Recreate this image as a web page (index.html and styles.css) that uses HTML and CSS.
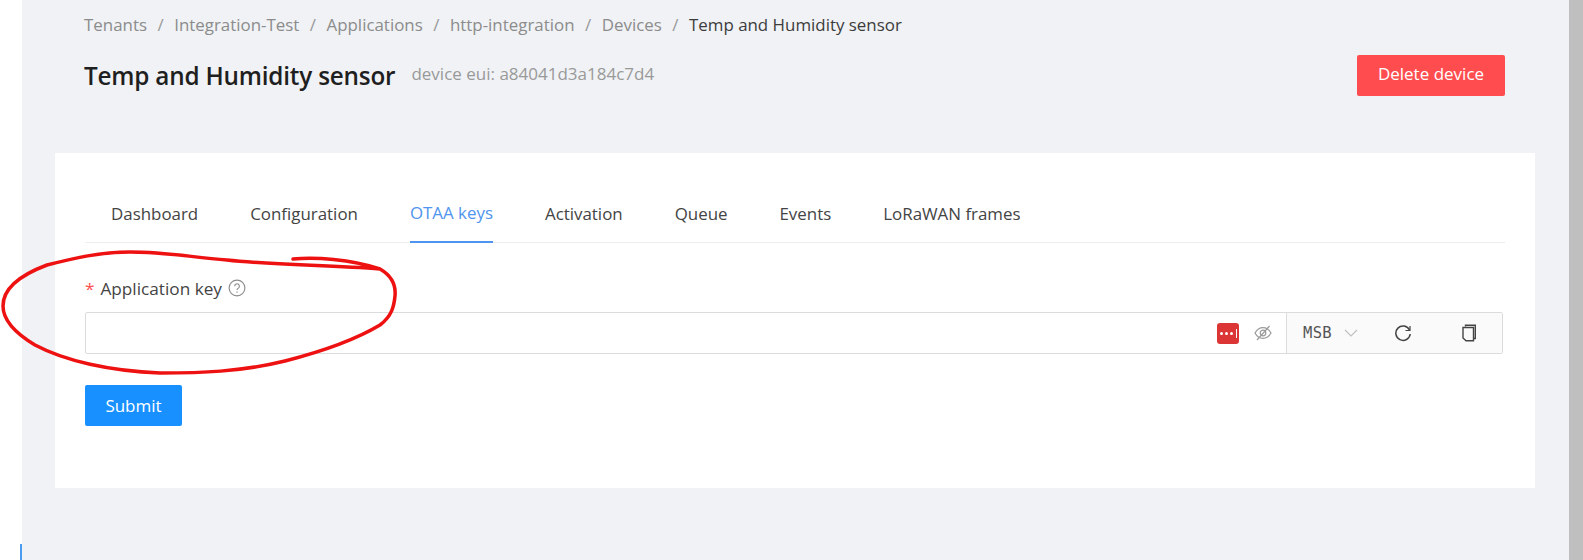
FILE: index.html
```html
<!DOCTYPE html>
<html lang="en">
<head>
<meta charset="utf-8">
<title>Temp and Humidity sensor</title>
<link rel="stylesheet" href="styles.css">
</head>
<body>
<div class="shot">
  <div class="gutter"><div class="gutter-mark"></div></div>
  <main class="content">
    <header class="page-head">
      <nav class="crumbs">
        <span>Tenants</span><i>/</i><span>Integration-Test</span><i>/</i><span>Applications</span><i>/</i><span>http-integration</span><i>/</i><span>Devices</span><i>/</i><span class="current">Temp and Humidity sensor</span>
      </nav>
      <div class="title-row">
        <h1>Temp and Humidity sensor</h1>
        <span class="sub">device eui: a84041d3a184c7d4</span>
        <button class="btn btn-danger">Delete device</button>
      </div>
    </header>
    <section class="card">
      <div class="tabs">
        <a>Dashboard</a><a>Configuration</a><a class="active">OTAA keys</a><a>Activation</a><a>Queue</a><a>Events</a><a>LoRaWAN frames</a>
      </div>
      <div class="label-row">
        <span class="req">*</span><span>Application key</span>
        <svg class="help" viewBox="0 0 16 16" width="18" height="18" fill="none" stroke="#8c8c8c" stroke-width="1"><circle cx="8" cy="8" r="7"/><path d="M5.900 6.400a2.100 2.100 0 1 1 3.300 1.700c-.8.5-1.200.9-1.200 1.700"/><path d="M8 11.200v1"/></svg>
      </div>
      <div class="key-field">
        <div class="key-input">
          <span class="lp"><b></b><b></b><b></b><em></em></span>
          <svg class="eye" viewBox="0 0 18 18" width="18" height="18" fill="none" stroke="#9a9a9a" stroke-width="1.2"><path d="M1 9c2-3.600 4.800-5.400 8-5.400s6 1.800 8 5.400c-2 3.600-4.800 5.400-8 5.400S3 12.600 1 9z"/><circle cx="9" cy="9" r="2.800"/><path d="M3 16L15.500 2"/></svg>
        </div>
        <div class="key-addon">
          <span class="msb">MSB</span>
          <svg class="chev" viewBox="0 0 14 8" width="14" height="8" fill="none" stroke="#bfbfbf" stroke-width="1.100"><path d="M1 1l6 6 6-6"/></svg>
          <svg class="reload" viewBox="0 0 18 18" width="18" height="18" fill="none" stroke="#444" stroke-width="1.500"><path d="M15.500 6A7.200 7.200 0 1 0 16.200 10"/><path d="M16 2v4.500h-4.500" stroke-width="1.200"/></svg>
          <svg class="copy" viewBox="0 0 16 18" width="16" height="18" fill="none" stroke="#444" stroke-width="1.400"><path d="M4.500 2.500V1.200h9.800v13.300h-1.400"/><path d="M2 3.500h10.500v13.300H5L2 14z"/></svg>
        </div>
      </div>
      <button class="btn btn-primary">Submit</button>
    </section>
  </main>
  <div class="scrollbar"></div>
  <svg class="scribble" viewBox="0 0 1583 560" width="1583" height="560" fill="none" stroke="#ee1111" stroke-width="3.500" stroke-linecap="round" stroke-linejoin="round"><path d="M293 259C315 257 350 259 380 269C392 276 396 286 395 296C394 306 392 316 380 325C355 340 320 352 285 361C240 372 200 373 160 373C110 371 65 361 35 345C15 333 3 320 3 306C3 292 15 277 47 265C75 258 100 252 130 252C165 252 190 257 227 260C270 265 330 265 380 269"/></svg>
</div>
</body>
</html>
```
FILE: styles.css
```css
* { box-sizing: border-box; }
html, body { margin: 0; padding: 0; }
body { font-family: "Open Sans", "Noto Sans", sans-serif; font-size: 14px; color: #3c3c3c; background: #fff; }
.shot { position: relative; display: flex; width: 1583px; height: 560px; overflow: hidden; }
.gutter { width: 22px; flex: none; display: flex; align-items: flex-end; justify-content: flex-end; }
.gutter-mark { width: 2px; height: 16px; background: #4a9cf0; }
.content { width: 1547px; flex: none; background: #f0f2f5; padding: 0 34px 0 33px; }
.scrollbar { width: 14px; flex: none; background: #bfbfbf; }
.page-head { padding: 13px 30px 0 29px; height: 153px; }
.crumbs { display: flex; align-items: center; height: 22px; color: #8c8c8c; font-size: 16.900px; }
.crumbs i { font-style: normal; margin: 0 10.500px; color: #999; }
.crumbs .current { color: #3c3c3c; }
.title-row { display: flex; align-items: center; margin-top: 20px; height: 41px; }
h1 { margin: 0; font-size: 24.300px; font-weight: 600; line-height: 30px; color: #1f1f1f; letter-spacing: -.2px; }
.sub { margin-left: 16px; margin-top: -4px; color: #999; font-size: 17px; }
.btn { border: 0; border-radius: 2px; font: inherit; font-size: 17px; color: #fff; height: 41px; padding: 0; }
.btn-danger { margin-left: auto; width: 148px; padding-bottom: 4px; background: #ff4d4f; }
.btn-primary { width: 97px; background: #1890ff; }
.card { width: 1480px; height: 335px; background: #fff; padding: 29px 30px 0; }
.tabs { display: flex; gap: 52px; height: 61px; padding: 0 26px; border-bottom: 1px solid #eee; font-size: 16.900px; }
.tabs a { display: flex; align-items: center; height: 61px; padding-top: 2px; color: #444; white-space: nowrap; }
.tabs a.active { color: #4f94ee; border-bottom: 2px solid #4f94ee; }
.label-row { display: flex; align-items: center; gap: 6px; height: 22px; margin-top: 34px; font-size: 17.200px; color: #444; }
.req { color: #ff4d4f; }
.key-field { display: flex; width: 1418px; height: 42px; margin-top: 13px; margin-bottom: 31px; border: 1px solid #dcdcdc; border-radius: 2px; }
.key-input { flex: 1; display: flex; align-items: center; justify-content: flex-end; gap: 15px; padding-right: 14px; border-right: 1px solid #dcdcdc; }
.lp { width: 22px; height: 21px; border-radius: 3px; background: #dc3535; display: flex; align-items: center; justify-content: center; gap: 2px; }
.lp b { width: 3px; height: 3px; border-radius: 50%; background: #fff; }
.lp em { width: 1px; height: 9px; margin-left: 1px; background: #fff; }
.key-addon { width: 215px; flex: none; display: flex; align-items: center; padding-left: 16px; background: #fafafa; }
.msb { font-family: "DejaVu Sans Mono", "Liberation Mono", monospace; font-size: 15.500px; letter-spacing: .3px; color: #555; }
.chev { margin-left: 12px; }
.reload { margin-left: 36px; }
.copy { margin-left: 49px; }
.scribble { position: absolute; left: 0; top: 0; pointer-events: none; }
```
